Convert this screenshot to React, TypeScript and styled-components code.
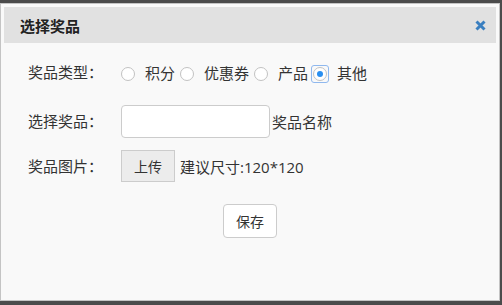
import React, { useState } from "react";
import styled, { createGlobalStyle } from "styled-components";

const Global = createGlobalStyle`
  html, body { margin: 0; padding: 0; background: #4b4b4b; }
  body { font-family: "Open Sans", "Noto Sans CJK SC", sans-serif; }
  * { box-sizing: border-box; }
`;

const Page = styled.div`
  width: 502px;
  height: 305px;
  overflow: hidden;
  padding-top: 3px;
`;

const Dialog = styled.div`
  width: 500px;
  height: 298px;
  border: 1px solid #c4c4c4;
  background: #f9f9f9;
  padding: 3px 3px 0 3px;
  display: flex;
  flex-direction: column;
`;

const Header = styled.div`
  height: 36px;
  background: #e1e1e1;
  display: flex;
  align-items: center;
  justify-content: space-between;
  padding: 0 10px 0 16px;
`;

const Title = styled.div`
  font-family: "Noto Sans CJK SC", sans-serif;
  font-size: 15px;
  font-weight: 700;
  color: #222;
`;

const Close = styled.button`
  border: 0;
  background: none;
  padding: 0;
  width: 12px;
  height: 12px;
  display: flex;
  align-items: center;
  justify-content: center;
  cursor: pointer;
`;

const Form = styled.div`
  padding: 16px 0 0 24px;
  display: flex;
  flex-direction: column;
  font-size: 15px;
  color: #333;
`;

const Row = styled.div<{ $top: number; $h: number }>`
  display: flex;
  align-items: center;
  margin-top: ${(p) => p.$top}px;
  height: ${(p) => p.$h}px;
`;

const Label = styled.div`
  width: 93px;
  flex: none;
  color: #333;
  line-height: 1;
`;

const RadioGroup = styled.div`
  display: flex;
  align-items: center;
`;

const RadioItem = styled.label`
  display: flex;
  align-items: center;
  margin-right: 5px;
  cursor: pointer;
  color: #333;
`;

const RadioBox = styled.span<{ $focus: boolean }>`
  width: 18px;
  height: 18px;
  display: flex;
  align-items: center;
  justify-content: center;
  margin: 3px 8px 0 -2px;
  border-radius: 3px;
  border: 1.5px solid ${(p) => (p.$focus ? "#8fb8ee" : "transparent")};
`;

const Circle = styled.span<{ $checked: boolean }>`
  width: 14px;
  height: 14px;
  border-radius: 50%;
  border: 1px solid #c2c2c2;
  background: #fff;
  display: flex;
  align-items: center;
  justify-content: center;
  &::after {
    content: "";
    width: 6px;
    height: 6px;
    border-radius: 50%;
    background: #2a8ff0;
    display: ${(p) => (p.$checked ? "block" : "none")};
  }
`;

const Input = styled.input`
  width: 149px;
  height: 33px;
  border: 1px solid #ccc;
  border-radius: 4px;
  background: #fff;
  padding: 0 8px;
  font: inherit;
  margin-right: 2px;
  outline: none;
`;

const Text = styled.span`
  color: #333;
`;

const Button = styled.button<{ $gray?: boolean }>`
  height: ${(p) => (p.$gray ? 32 : 34)}px;
  width: 54px;
  border: 1px solid #ccc;
  border-radius: ${(p) => (p.$gray ? 0 : 4)}px;
  background: ${(p) => (p.$gray ? "#ececec" : "#fff")};
  color: #333;
  font-family: "Noto Sans CJK SC", sans-serif;
  font-size: 14px;
  padding: 0;
  cursor: pointer;
`;

const UploadButton = styled(Button)`
  margin-right: 5px;
`;

const SaveRow = styled.div`
  display: flex;
  margin-top: 22px;
  padding-left: 195px;
`;

const types = ["积分", "优惠券", "产品", "其他"];

export default function App() {
  const [sel, setSel] = useState(3);
  return (
    <Page>
      <Global />
      <Dialog>
        <Header>
          <Title>选择奖品</Title>
          <Close aria-label="close">
            <svg width="11" height="11" viewBox="0 0 11 11">
              <path d="M1.5 1.5 L9.5 9.5 M9.5 1.5 L1.5 9.5" stroke="#3a7fc0" strokeWidth="3" strokeLinecap="butt" />
            </svg>
          </Close>
        </Header>
        <Form>
          <Row $top={0} $h={26}>
            <Label>奖品类型：</Label>
            <RadioGroup>
              {types.map((t, i) => (
                <RadioItem key={t} onClick={() => setSel(i)}>
                  <RadioBox $focus={sel === i}>
                    <Circle $checked={sel === i} />
                  </RadioBox>
                  {t}
                </RadioItem>
              ))}
            </RadioGroup>
          </Row>
          <Row $top={20} $h={33}>
            <Label>选择奖品：</Label>
            <Input />
            <Text>奖品名称</Text>
          </Row>
          <Row $top={12} $h={32}>
            <Label>奖品图片：</Label>
            <UploadButton $gray>上传</UploadButton>
            <Text>建议尺寸:120*120</Text>
          </Row>
          <SaveRow>
            <Button>保存</Button>
          </SaveRow>
        </Form>
      </Dialog>
    </Page>
  );
}
